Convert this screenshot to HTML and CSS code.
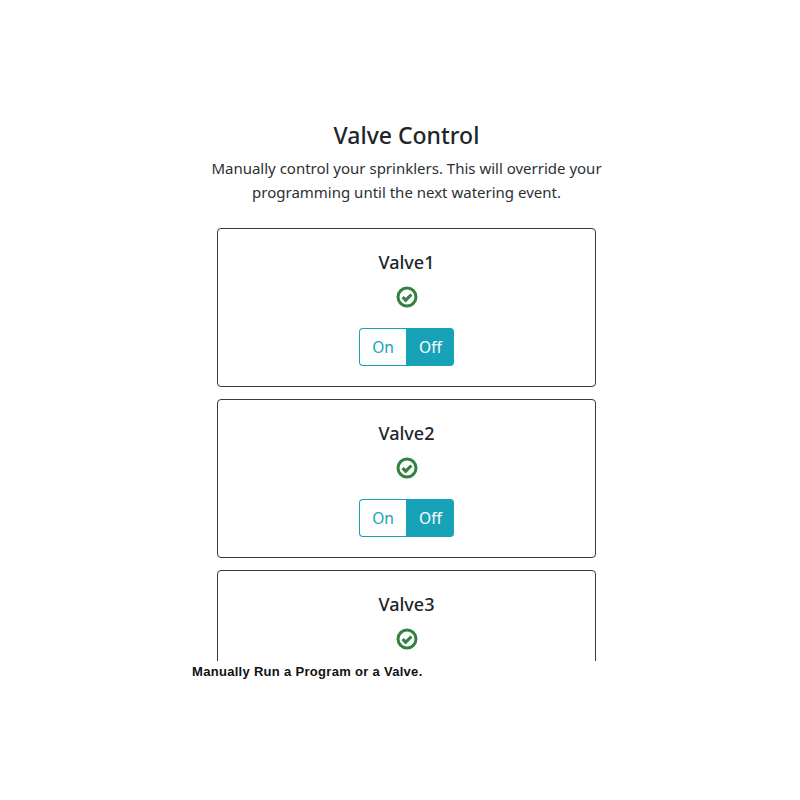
FILE: index.html
```html
<!DOCTYPE html>
<html lang="en">
<head>
<meta charset="utf-8">
<title>Valve Control</title>
<link rel="stylesheet" href="styles.css">
</head>
<body>
<main class="frame">
  <div class="panel">
    <h1 class="title">Valve Control</h1>
    <p class="lead">Manually control your sprinklers. This will override your programming until the next watering event.</p>
    <div class="cards">
      <section class="card">
        <h2 class="name">Valve1</h2>
        <svg class="status" viewBox="0 0 22 22" aria-hidden="true"><circle cx="11" cy="11" r="9" fill="none" stroke="#34803f" stroke-width="3"/><path d="M6.6 11.1l3.1 3.1 5.7-5.7" fill="none" stroke="#34803f" stroke-width="3.1"/></svg>
        <div class="toggle"><span class="opt">On</span><span class="opt active">Off</span></div>
      </section>
      <section class="card">
        <h2 class="name">Valve2</h2>
        <svg class="status" viewBox="0 0 22 22" aria-hidden="true"><circle cx="11" cy="11" r="9" fill="none" stroke="#34803f" stroke-width="3"/><path d="M6.6 11.1l3.1 3.1 5.7-5.7" fill="none" stroke="#34803f" stroke-width="3.1"/></svg>
        <div class="toggle"><span class="opt">On</span><span class="opt active">Off</span></div>
      </section>
      <section class="card">
        <h2 class="name">Valve3</h2>
        <svg class="status" viewBox="0 0 22 22" aria-hidden="true"><circle cx="11" cy="11" r="9" fill="none" stroke="#34803f" stroke-width="3"/><path d="M6.6 11.1l3.1 3.1 5.7-5.7" fill="none" stroke="#34803f" stroke-width="3.1"/></svg>
      </section>
    </div>
  </div>
</main>
<p class="caption">Manually Run a Program or a Valve.</p>
</body>
</html>
```
FILE: styles.css
```css
* { box-sizing: border-box; }
body { margin: 0; background: #fff; color: #212529; font-family: "Noto Sans", sans-serif; }
.frame { height: 661px; overflow: hidden; padding-top: 120px; display: flex; justify-content: center; padding-left: 13px; }
.panel { width: 400px; display: flex; flex-direction: column; align-items: center; }
.title { margin: 0; font-size: 23px; line-height: 30px; font-weight: 500; }
.lead { margin: 6px 0 0; font-size: 15px; line-height: 24px; text-align: center; color: #2b3035; }
.cards { margin-top: 24px; width: 379px; display: flex; flex-direction: column; gap: 12px; flex: none; }
.card { height: 159px; flex: none; border: 1px solid #343a40; border-radius: 4px; display: flex; flex-direction: column; align-items: center; padding-top: 20px; }
.name { margin: 0; font-size: 18px; line-height: 26px; font-weight: 500; }
.status { width: 22px; height: 22px; margin-top: 11px; display: block; }
.toggle { margin-top: 20px; display: flex; height: 38px; }
.opt { width: 47px; display: flex; align-items: center; justify-content: center; font-size: 15.5px; color: #17a2b8; border: 1px solid #17a2b8; border-right: 0; border-radius: 4px 0 0 4px; }
.opt.active { width: 48px; background: #17a2b8; color: #fff; border-radius: 0 4px 4px 0; }
.caption { margin: 3px 0 0 192px; font: bold 13px/15px "Liberation Sans", sans-serif; letter-spacing: .3px; color: #111; }
```
